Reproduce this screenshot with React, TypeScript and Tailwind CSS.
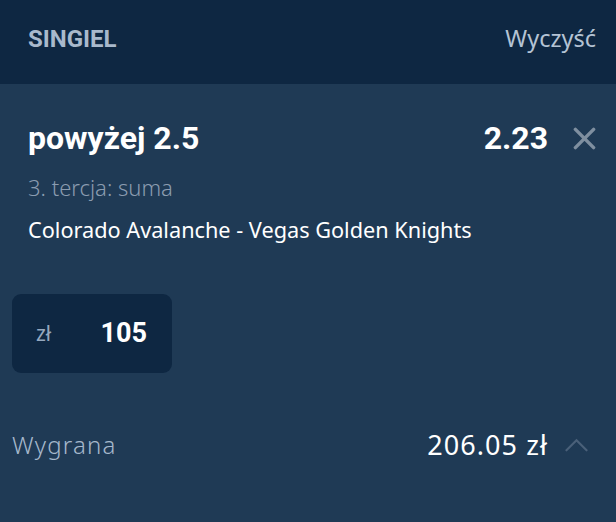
const LIGHT = "font-['Noto_Sans','Open_Sans',sans-serif]";
const BOLD = "font-['Roboto','Liberation_Sans',sans-serif]";

function CloseIcon(): JSX.Element {
  return (
    <svg viewBox="0 0 24 24" className="ml-[25px] h-[23px] w-[23px] text-[#7f8fa0]" aria-hidden="true">
      <path d="M2.5 2.5 21.5 21.5M21.5 2.5 2.5 21.5" stroke="currentColor" strokeWidth={3.6} strokeLinecap="round" fill="none" />
    </svg>
  );
}

function CaretUp(): JSX.Element {
  return (
    <svg viewBox="0 0 24 14" className="ml-[17px] h-[14px] w-[23px] text-[#4a6079]" aria-hidden="true">
      <path d="M1.5 12.5 12 2l10.5 10.5" stroke="currentColor" strokeWidth={2.2} strokeLinecap="round" fill="none" />
    </svg>
  );
}

export default function App(): JSX.Element {
  return (
    <div className="h-[522px] w-[616px] overflow-hidden bg-[#1f3a55]">
      <header className="flex h-[84px] items-center justify-between bg-[#0e2742] pb-[6px] pl-[28px] pr-[20px]">
        <span className={`${BOLD} text-[24px] font-bold text-[#a9b9cc]`}>SINGIEL</span>
        <button type="button" className={`${LIGHT} text-[23.5px] text-[#b4c3d4]`}>
          Wyczyść
        </button>
      </header>

      <section className="pl-[28px] pr-[20px] pt-[34px]">
        <div className="flex h-[40px] items-center">
          <h2 className={`${BOLD} flex-1 text-[32px] font-bold leading-none text-white`}>powyżej 2.5</h2>
          <span className={`${BOLD} text-[32px] font-bold leading-none text-white`}>2.23</span>
          <CloseIcon />
        </div>
        <p className={`${LIGHT} mt-[14px] flex h-[30px] items-center text-[22px] font-light text-[#8b9cb0]`}>
          3. tercja: suma
        </p>
        <p className={`${LIGHT} mt-[13px] flex h-[30px] items-center text-[21.7px] text-white`}>
          Colorado Avalanche - Vegas Golden Knights
        </p>
      </section>

      <div className="px-[12px] pt-[49px]">
        <div className="flex h-[79px] w-[160px] items-center justify-between rounded-[9px] bg-[#0e2742] pl-[24px] pr-[25px]">
          <span className={`${LIGHT} text-[21px] text-[#95a8bf]`}>zł</span>
          <span className={`${BOLD} text-[27px] font-bold text-white`}>105</span>
        </div>
      </div>

      <div className="mt-[52px] flex h-[40px] items-center pl-[12px] pr-[28px]">
        <span className={`${LIGHT} flex-1 text-[24px] font-light tracking-[0.05em] text-[#a6b8cc]`}>Wygrana</span>
        <span className={`${LIGHT} text-[27px] tracking-[0.04em] text-white`}>206.05 zł</span>
        <CaretUp />
      </div>
    </div>
  );
}
